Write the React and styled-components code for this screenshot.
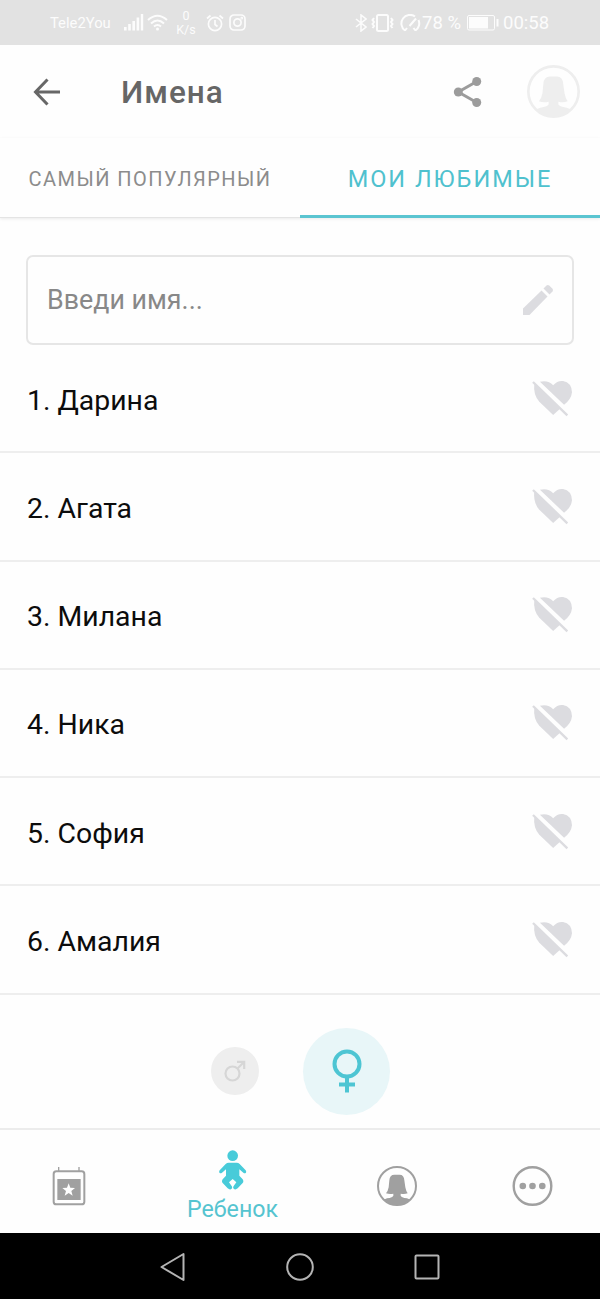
import React, { useState } from "react";
import styled, { createGlobalStyle } from "styled-components";

const GlobalStyle = createGlobalStyle`
    * {
        box-sizing: border-box;
    }

    body {
        margin: 0;
        background: #fefefe;
        font-family: Roboto, "Noto Sans", sans-serif;
    }

    svg {
        display: block;
        flex-shrink: 0;
    }

    button {
        border: 0;
        padding: 0;
        background: none;
        font-family: inherit;
    }
`

const Screen = styled.div`
    width: 600px;
    height: 1299px;
    display: flex;
    flex-direction: column;
    overflow: hidden;
`

const StatusBar = styled.div`
    height: 45px;
    flex-shrink: 0;
    display: flex;
    align-items: center;
    justify-content: space-between;
    padding: 0 50px;
    background: #e2e2e2;
    color: #fcfcfc;
`

const StatusGroup = styled.div`
    display: flex;
    align-items: center;
`

const StatusItem = styled.div`
    width: ${props => props.$width}px;
    margin-left: ${props => props.$gap || 0}px;
    font-size: ${props => props.$size || 18.5}px;
    line-height: 14px;
    text-align: ${props => props.$center ? "center" : "left"};
    white-space: nowrap;
`

const Header = styled.header`
    height: 93px;
    flex-shrink: 0;
    display: flex;
    align-items: center;
    padding: 0 20px 0 32px;
`

const Title = styled.h1`
    flex: 1;
    margin: 3px 0 0 59px;
    font-size: 31.5px;
    line-height: 40px;
    font-weight: 500;
    letter-spacing: 1px;
    color: #666;
`

const ShareButton = styled.button`
    margin-right: 44px;
`

const Tabs = styled.nav`
    height: 80px;
    flex-shrink: 0;
    display: flex;
    border-bottom: 1px solid #e4e4e4;
    box-shadow: 0 1px 3px rgba(0, 0, 0, .08);
`

const Tab = styled.button`
    width: 50%;
    height: 80px;
    padding-top: 4px;
    border-bottom: 3px solid ${props => props.$active ? "#5bc5d1" : "transparent"};
    color: ${props => props.$active ? "#4fc1ce" : "#8c8c8c"};
    font-size: ${props => props.$active ? 23.5 : 20}px;
    letter-spacing: ${props => props.$active ? 2 : 1.45}px;
    white-space: nowrap;
`

const NameField = styled.div`
    height: 90px;
    flex-shrink: 0;
    margin: 37px 26px 0 26px;
    padding: 0 18px 0 19px;
    display: flex;
    align-items: center;
    justify-content: space-between;
    border: 2px solid #e6e6e6;
    border-radius: 7px;
    font-size: 26.8px;
    color: #888;
`

const NameList = styled.ul`
    margin: 0;
    padding: 0;
    list-style: none;
    flex-shrink: 0;
`

const NameRow = styled.li`
    height: 108.25px;
    padding: 0 27px;
    display: flex;
    align-items: center;
    justify-content: space-between;
    border-bottom: 2px solid #eee;
    color: #0c0c0c;
`

const NameText = styled.span`
    padding-top: 4px;
    font-size: 28.4px;
`

const GenderPicker = styled.div`
    flex: 1;
    display: flex;
    align-items: center;
    gap: 44px;
    padding: 20px 0 0 211px;
`

const GenderButton = styled.button`
    width: ${props => props.$size}px;
    height: ${props => props.$size}px;
    border-radius: 50%;
    display: flex;
    align-items: center;
    justify-content: center;
    background: ${props => props.$active ? "#e8f6f8" : "#eee"};
    color: ${props => props.$active ? "#4dc5d3" : "#d6d6d6"};
`

const BottomNav = styled.nav`
    height: 105px;
    flex-shrink: 0;
    display: grid;
    grid-template-columns: 138px 189px 139px 132px;
    border-top: 2px solid #ececec;
`

const NavItem = styled.button`
    display: flex;
    flex-direction: column;
    align-items: center;
    justify-content: ${props => props.$active ? "flex-start" : "center"};
    padding-top: ${props => props.$active ? 20 : 9}px;
    color: ${props => props.$active ? "#48cbd9" : "#a0a0a0"};
`

const NavLabel = styled.span`
    margin-top: 5px;
    font-size: 23.2px;
    line-height: 28px;
    color: #55c4d0;
`

const SystemBar = styled.div`
    height: 66px;
    flex-shrink: 0;
    display: flex;
    align-items: center;
    justify-content: space-between;
    padding: 1px 159px 0 159px;
    background: #000;
    color: #b4b4b4;
`

const SignalIcon = () => (
    <svg width="20" height="17" viewBox="0 0 20 17" fill="currentColor">
        <rect x="0" y="13" width="2.6" height="3.5" />
        <rect x="4.2" y="10" width="2.6" height="6.5" />
        <rect x="8.4" y="7" width="2.6" height="9.5" />
        <rect x="12.6" y="3.5" width="2.6" height="13" />
        <rect x="16.8" y="0" width="2.4" height="16.5" />
    </svg>
)

const WifiIcon = () => (
    <svg width="21" height="17" viewBox="0 0 21 17" fill="none" stroke="currentColor" strokeWidth="2">
        <path d="M1 6Q10.500 -2.500 20 6M4 9.500Q10.500 3.500 17 9.500M7 12.500Q10.500 9.500 14 12.500" />
        <circle cx="10.500" cy="15" r="1.500" fill="currentColor" stroke="none" />
    </svg>
)

const AlarmIcon = () => (
    <svg width="18" height="18" viewBox="0 0 18 18" fill="none" stroke="currentColor" strokeWidth="1.700">
        <circle cx="9" cy="10" r="6.600" />
        <path d="M9 6V10.500L11.500 12.500M1 4.500L4.500 1.500M17 4.500L13.500 1.500" />
    </svg>
)

const InstagramIcon = () => (
    <svg width="17" height="17" viewBox="0 0 17 17" fill="none" stroke="currentColor" strokeWidth="1.700">
        <rect x="1" y="1" width="15" height="15" rx="4" />
        <circle cx="8.500" cy="8.500" r="3.600" />
        <circle cx="12.800" cy="4.200" r=".5" />
    </svg>
)

const BluetoothIcon = () => (
    <svg width="12" height="18" viewBox="0 0 12 18" fill="none" stroke="currentColor" strokeWidth="1.600">
        <path d="M1 5L11 13L6 17V1L11 5L1 13" />
    </svg>
)

const VibrateIcon = () => (
    <svg width="23" height="18" viewBox="0 0 23 18" fill="none" stroke="currentColor" strokeWidth="2">
        <rect x="6" y="1" width="11" height="16" rx="1.500" />
        <path d="M3 4L1.500 6L3 8L1.500 10L3 12L1.500 14M20 4L21.500 6L20 8L21.500 10L20 12L21.500 14" />
    </svg>
)

const GaugeIcon = () => (
    <svg width="21" height="18" viewBox="0 0 21 18" fill="none" stroke="currentColor" strokeWidth="2">
        <path d="M5 16.500A8.500 8.500 0 0 1 15 2.500M18.500 6A8.500 8.500 0 0 1 15.500 16.500M9.500 12L16 4.500M5 16.500L7 14M15.500 16.500L13.500 14" />
    </svg>
)

const BatteryIcon = () => (
    <svg width="32" height="16" viewBox="0 0 32 16" fill="none" stroke="currentColor">
        <rect x=".5" y=".5" width="27" height="14.500" rx="1.500" />
        <rect x="2" y="2" width="19" height="11.500" fill="currentColor" stroke="none" />
        <path d="M30.500 4V11.500" strokeWidth="2" />
    </svg>
)

const BackIcon = () => (
    <svg width="30" height="30" viewBox="0 0 30 30" fill="none" stroke="#676767" strokeWidth="3">
        <path d="M15.500 2.500L3.500 15L15.500 27.500M3.500 15H28" />
    </svg>
)

const ShareIcon = () => (
    <svg width="30" height="32" viewBox="0 0 30 32" fill="#9c9c9c" stroke="#9c9c9c">
        <path d="M23.700 5.500L5.300 16L23.700 26.500" fill="none" strokeWidth="3" />
        <circle cx="5.300" cy="16" r="4.500" stroke="none" />
        <circle cx="23.700" cy="5.500" r="4.500" stroke="none" />
        <circle cx="23.700" cy="26.500" r="4.500" stroke="none" />
    </svg>
)

// woman's bust inside a ring, used in the header and in the bottom nav
const ProfileIcon = ({ size, color = "currentColor", ring = 6 }) => (
    <svg width={size} height={size} viewBox="0 0 120 120" fill={color}>
        <circle cx="60" cy="60" r={60 - ring / 2} fill="none" stroke={color} strokeWidth={ring} />
        <path d="M37 43Q38 26 52 26H68Q81 26 82 43L85 64Q87 75 92 82Q82 86 71 83V89Q72 94 90 97L100 101A57 57 0 0 1 20 101L30 97Q48 94 49 89V83Q38 86 27 82Q33 75 35 64Z" />
    </svg>
)

const PencilIcon = () => (
    <svg width="32" height="32" viewBox="0 0 32 32" fill="#dcdce0">
        <path d="M1 24.500L19.500 6.500L25.500 12.500L7.500 31H1Z" />
        <path d="M21.500 4.500L24.500 1.500Q26 .5 27.500 1.800L30.500 4.800Q31.500 6 30.500 7.500L27.500 10.500Z" />
    </svg>
)

const HeartOffIcon = () => (
    <svg width="41" height="37" viewBox="96 420 124 112" fill="#dcdce0">
        <path d="M120 425Q145 419 160 436Q173 421 190 423Q216 428 217 457Q215 478 193 495Z" />
        <path d="M103 431L180 508L160 526L118 486Q99 463 103 431Z" />
        <path d="M99 426L203 527" fill="none" stroke="#dcdce0" strokeWidth="7" />
    </svg>
)

const MaleIcon = () => (
    <svg width="22" height="22" viewBox="0 0 22 22" fill="none" stroke="currentColor" strokeWidth="2.200">
        <circle cx="8.500" cy="13.500" r="7" />
        <path d="M13.500 8.500L20 2M13 1.800H20.200V9" />
    </svg>
)

const FemaleIcon = () => (
    <svg width="30" height="44" viewBox="0 0 30 44" fill="none" stroke="currentColor" strokeWidth="4">
        <circle cx="15" cy="15" r="12.500" />
        <path d="M15 27.500V43.500M7 35.500H23" />
    </svg>
)

const CalendarIcon = () => (
    <svg width="34" height="40" viewBox="157 138 102 120" fill="currentColor">
        <rect x="162" y="154" width="92" height="99" rx="8" fill="none" stroke="currentColor" strokeWidth="6" />
        <path d="M177 141V154M238 141V154" stroke="currentColor" strokeWidth="4" />
        <rect x="173" y="177" width="70" height="63" />
        <path d="M207 190L212 203L226 204L215 213L219 227L207 219L195 227L199 213L188 204L202 203Z" fill="#fff" />
    </svg>
)

const BabyIcon = () => (
    <svg width="28" height="40" viewBox="658 91 84 120" fill="currentColor">
        <circle cx="699" cy="108" r="16" />
        <path d="M687 129H711Q716 129 720 133L738 152Q741 157 738 160Q735 162 731 159L719 149V168L729 179Q733 185 729 190L714 206Q707 212 702 207Q699 203 702 199L710 188L699 178L688 188L696 199Q699 203 696 207Q691 212 684 206L669 190Q665 185 669 179L679 168V149L667 159Q663 162 660 160Q657 157 660 152L678 133Q682 129 687 129Z" />
    </svg>
)

const MoreIcon = () => (
    <svg width="41" height="40" viewBox="0 0 41 40" fill="currentColor">
        <circle cx="20.500" cy="20" r="18.800" fill="none" stroke="currentColor" strokeWidth="2.400" />
        <circle cx="10.800" cy="20" r="3.300" />
        <circle cx="20.500" cy="20" r="3.300" />
        <circle cx="30.300" cy="20" r="3.300" />
    </svg>
)

const names = ["Дарина", "Агата", "Милана", "Ника", "София", "Амалия"];

const App = () => {

    const [tab, setTab] = useState("favourites")

    return (
        <Screen>
            <GlobalStyle />
            <StatusBar>
                <StatusGroup>
                    <StatusItem $width={62} $size={14.8}>Tele2You</StatusItem>
                    <StatusItem $width={20} $gap={12}><SignalIcon /></StatusItem>
                    <StatusItem $width={21} $gap={3}><WifiIcon /></StatusItem>
                    <StatusItem $width={22} $gap={7} $size={12.5} $center>0<br />K/s</StatusItem>
                    <StatusItem $width={18} $gap={9}><AlarmIcon /></StatusItem>
                    <StatusItem $width={17} $gap={5}><InstagramIcon /></StatusItem>
                </StatusGroup>
                <StatusGroup>
                    <StatusItem $width={12}><BluetoothIcon /></StatusItem>
                    <StatusItem $width={23} $gap={4}><VibrateIcon /></StatusItem>
                    <StatusItem $width={21} $gap={6}><GaugeIcon /></StatusItem>
                    <StatusItem $width={40} $gap={1}>78 %</StatusItem>
                    <StatusItem $width={32} $gap={5}><BatteryIcon /></StatusItem>
                    <StatusItem $width={47} $gap={4}>00:58</StatusItem>
                </StatusGroup>
            </StatusBar>
            <Header>
                <button aria-label="Назад"><BackIcon /></button>
                <Title>Имена</Title>
                <ShareButton aria-label="Поделиться"><ShareIcon /></ShareButton>
                <ProfileIcon size={53} color="#eee" />
            </Header>
            <Tabs>
                <Tab $active={tab === "popular"} onClick={() => setTab("popular")}>САМЫЙ ПОПУЛЯРНЫЙ</Tab>
                <Tab $active={tab === "favourites"} onClick={() => setTab("favourites")}>МОИ ЛЮБИМЫЕ</Tab>
            </Tabs>
            <NameField>
                <span>Введи имя...</span>
                <PencilIcon />
            </NameField>
            <NameList>
                {names.map((name, idx) => (
                    <NameRow key={name}>
                        <NameText>{idx + 1}. {name}</NameText>
                        <HeartOffIcon />
                    </NameRow>
                ))}
            </NameList>
            <GenderPicker>
                <GenderButton $size={48}><MaleIcon /></GenderButton>
                <GenderButton $size={87} $active><FemaleIcon /></GenderButton>
            </GenderPicker>
            <BottomNav>
                <NavItem><CalendarIcon /></NavItem>
                <NavItem $active>
                    <BabyIcon />
                    <NavLabel>Ребенок</NavLabel>
                </NavItem>
                <NavItem><ProfileIcon size={40} /></NavItem>
                <NavItem><MoreIcon /></NavItem>
            </BottomNav>
            <SystemBar>
                <svg width="27" height="30" viewBox="0 0 27 30" fill="none" stroke="currentColor" strokeWidth="2" strokeLinejoin="round">
                    <path d="M24.500 2V28L2.500 15Z" />
                </svg>
                <svg width="28" height="28" viewBox="0 0 28 28" fill="none" stroke="currentColor" strokeWidth="2">
                    <circle cx="14" cy="14" r="12.800" />
                </svg>
                <svg width="28" height="28" viewBox="0 0 28 28" fill="none" stroke="currentColor" strokeWidth="2">
                    <rect x="2.500" y="2.500" width="23" height="23" rx="1" />
                </svg>
            </SystemBar>
        </Screen>
    )
}

export default App;
